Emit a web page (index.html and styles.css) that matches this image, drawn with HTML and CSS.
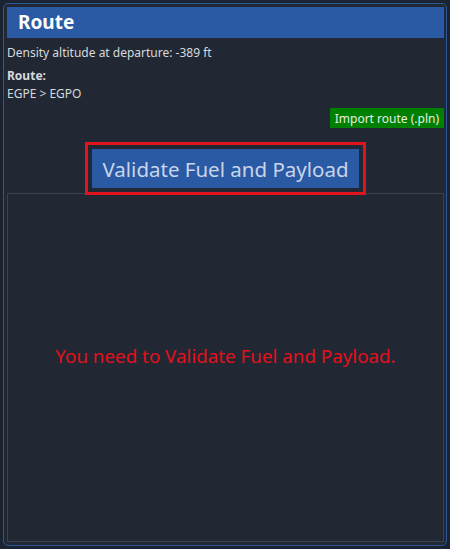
FILE: index.html
```html
<!DOCTYPE html>
<html lang="en">
<head>
    <meta charset="UTF-8">
    <meta name="viewport" content="width=device-width, initial-scale=1.0">
    <title>Route</title>
    <link rel="stylesheet" href="styles.css">
</head>
<body>
    <div class="panel">
        <h1 class="panel-title">Route</h1>

        <div class="route-info">
            <p class="density">Density altitude at departure: -389 ft</p>
            <p class="route-label">Route:</p>
            <p class="route-value">EGPE &gt; EGPO</p>
        </div>

        <div class="import-row">
            <button class="import-btn">Import route (.pln)</button>
        </div>

        <div class="validate-row">
            <button class="validate-btn">Validate Fuel and Payload</button>
        </div>

        <div class="result-box">
            <p class="result-msg">You need to Validate Fuel and Payload.</p>
        </div>
    </div>
</body>
</html>
```

FILE: styles.css
```css
body {
    margin: 0;
    padding: 3px;
    background-color: #1a2332;
    font-family: "Segoe UI", "Noto Sans", sans-serif;
    color: #d6d9de;
}
.panel {
    height: 543px;
    box-sizing: border-box;
    border: 1px solid #2d5796;
    border-radius: 5px;
    background-color: #212833;
    padding: 3px 2px 3px 3px;
    display: flex;
    flex-direction: column;
}
.panel-title {
    margin: 0;
    height: 31px;
    line-height: 30px;
    padding-left: 11px;
    background-color: #2a5aa3;
    color: #ffffff;
    font-size: 19px;
    font-weight: bold;
}
.route-info {
    padding: 5px 0 0 0;
    font-size: 12px;
}
.route-info p {
    margin: 0;
}
.density {
    line-height: 19px;
    margin-bottom: 5px !important;
}
.route-label {
    font-weight: bold;
    line-height: 18px;
}
.route-value {
    line-height: 18px;
}
.import-row {
    display: flex;
    justify-content: flex-end;
    margin-top: 5px;
}
.import-btn {
    border: none;
    background-color: #008000;
    color: #e6eee6;
    font-family: inherit;
    font-size: 12px;
    height: 20px;
    padding: 0 5px;
}
.validate-row {
    display: flex;
    justify-content: center;
    margin-top: 21px;
    position: relative;
    z-index: 1;
}
.validate-btn {
    border: none;
    background-color: #2a5aa3;
    color: #c9d5ea;
    font-family: inherit;
    font-size: 20.5px;
    height: 39px;
    padding: 0 10px;
    outline: 3px solid #e0141e;
    outline-offset: 4px;
}
.result-box {
    flex: 1;
    margin-top: 5px;
    border: 1px solid #3a424e;
    display: flex;
    align-items: center;
    justify-content: center;
    padding-bottom: 24px;
}
.result-msg {
    margin: 0;
    color: #e3101c;
    font-size: 18.8px;
}
```
